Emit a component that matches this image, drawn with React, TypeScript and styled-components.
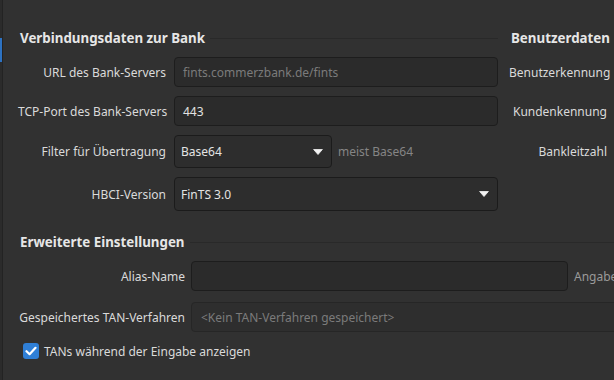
import React from 'react';
import styled, { createGlobalStyle } from 'styled-components';

const GlobalStyle = createGlobalStyle`
  html, body {
    margin: 0;
    padding: 0;
    background: #313131;
  }
  body {
    font-family: 'Noto Sans', 'DejaVu Sans', sans-serif;
  }
`;

const Window = styled.div`
  display: flex;
  width: 614px;
  height: 380px;
  overflow: hidden;
  background: #313131;
  color: #dcdcdc;
  font-size: 12px;
`;

const Edge = styled.div`
  flex: none;
  width: 2px;
  padding-top: 38px;
  background: #2b2b2b;
  border-right: 1px solid #232323;
`;

const EdgeMarker = styled.div`
  height: 24px;
  background: #2d72c2;
`;

const Content = styled.div`
  flex: 1;
  min-width: 0;
  display: flex;
  flex-direction: column;
  padding: 28px 0 0 15px;
`;

const TopRow = styled.div`
  display: flex;
  gap: 11px;
`;

const Group = styled.div<{ $width?: number }>`
  flex: none;
  width: ${(p) => (p.$width ? `${p.$width}px` : 'auto')};
  display: flex;
  flex-direction: column;
`;

const Header = styled.div<{ $top?: number }>`
  display: flex;
  align-items: center;
  gap: 5px;
  height: 20px;
  padding-left: 2px;
  margin-top: ${(p) => p.$top ?? 0}px;
  margin-bottom: 9px;
`;

const HeaderTitle = styled.span`
  font-size: 13.33px;
  font-weight: 700;
  color: #e6e6e6;
  white-space: nowrap;
`;

const HeaderLine = styled.div`
  flex: 1;
  height: 1px;
  background: #292929;
`;

const Form = styled.div<{ $cols: string; $rows: string; $rowGap: number; $colGap: number }>`
  display: grid;
  grid-template-columns: ${(p) => p.$cols};
  grid-template-rows: ${(p) => p.$rows};
  row-gap: ${(p) => p.$rowGap}px;
  column-gap: ${(p) => p.$colGap}px;
  align-items: center;
`;

const Label = styled.label`
  text-align: right;
  white-space: nowrap;
  color: #dadada;
`;

const Field = styled.div<{ $muted?: boolean }>`
  box-sizing: border-box;
  height: 30px;
  display: flex;
  align-items: center;
  padding: 0 8px;
  border: 1px solid #1d1d1d;
  border-radius: 4px;
  background: #2b2b2b;
  color: ${(p) => (p.$muted ? '#7b7b7b' : '#e2e2e2')};
  white-space: nowrap;
  overflow: hidden;
`;

const FlatField = styled(Field)`
  grid-column: 2 / -1;
  width: 460px;
  background: #2e2e2e;
  border-color: #262626;
  padding-left: 9px;
`;

const ComboCell = styled.div`
  display: flex;
  align-items: center;
  gap: 6px;
  height: 100%;
`;

const Combo = styled.div<{ $width?: number }>`
  box-sizing: border-box;
  width: ${(p) => (p.$width ? `${p.$width}px` : '100%')};
  height: 100%;
  display: flex;
  align-items: center;
  justify-content: space-between;
  padding: 0 8px 0 6px;
  border: 1px solid #1b1b1b;
  border-radius: 4px;
  background: #2d2d2d;
  color: #e4e4e4;
`;

const Hint = styled.span`
  color: #858585;
  white-space: nowrap;
`;

const SideHint = styled(Hint)`
  color: #9a9a9a;
`;

const CheckRow = styled.label`
  display: flex;
  align-items: center;
  gap: 5px;
  margin-top: 11px;
  padding-left: 5px;
  height: 16px;
  color: #dadada;
`;

const CheckBox = styled.span`
  width: 16px;
  height: 16px;
  border-radius: 3px;
  background: #2f7fd6;
  display: flex;
  align-items: center;
  justify-content: center;
`;

const Arrow = () => (
  <svg width="10" height="6" viewBox="0 0 10 6">
    <path d="M0.6 0.5 H9.4 L5 5.5 Z" fill="#f2f2f2" stroke="#f2f2f2" strokeWidth="0.8" strokeLinejoin="round" />
  </svg>
);

const Check = () => (
  <svg width="12" height="10" viewBox="0 0 12 10">
    <path d="M1.5 5.2 L4.6 8.2 L10.5 1.8" fill="none" stroke="#ffffff" strokeWidth="2.2" strokeLinecap="round" strokeLinejoin="round" />
  </svg>
);

const App = () => (
  <>
    <GlobalStyle />
    <Window>
      <Edge>
        <EdgeMarker />
      </Edge>
      <Content>
        <TopRow>
          <Group $width={480}>
            <Header>
              <HeaderTitle>Verbindungsdaten zur Bank</HeaderTitle>
              <HeaderLine />
            </Header>
            <Form $cols="148px 1fr" $rows="30px 30px 33px 34px" $rowGap={9} $colGap={8}>
              <Label>URL des Bank-Servers</Label>
              <Field $muted>fints.commerzbank.de/fints</Field>
              <Label>TCP-Port des Bank-Servers</Label>
              <Field>443</Field>
              <Label>Filter für Übertragung</Label>
              <ComboCell>
                <Combo $width={158}>
                  <span>Base64</span>
                  <Arrow />
                </Combo>
                <Hint>meist Base64</Hint>
              </ComboCell>
              <Label>HBCI-Version</Label>
              <ComboCell>
                <Combo>
                  <span>FinTS 3.0</span>
                  <Arrow />
                </Combo>
              </ComboCell>
            </Form>
          </Group>
          <Group>
            <Header>
              <HeaderTitle>Benutzerdaten</HeaderTitle>
            </Header>
            <Form $cols="98px 200px" $rows="30px 30px 33px" $rowGap={9} $colGap={8}>
              <Label>Benutzerkennung</Label>
              <Field />
              <Label>Kundenkennung</Label>
              <Field />
              <Label>Bankleitzahl</Label>
              <Field />
            </Form>
          </Group>
        </TopRow>
        <Header $top={21}>
          <HeaderTitle>Erweiterte Einstellungen</HeaderTitle>
          <HeaderLine />
        </Header>
        <Form $cols="167px 377px auto" $rows="30px 30px" $rowGap={11} $colGap={6}>
          <Label>Alias-Name</Label>
          <Field />
          <SideHint>Angabe optional</SideHint>
          <Label>Gespeichertes TAN-Verfahren</Label>
          <FlatField $muted>&lt;Kein TAN-Verfahren gespeichert&gt;</FlatField>
        </Form>
        <CheckRow>
          <CheckBox>
            <Check />
          </CheckBox>
          TANs während der Eingabe anzeigen
        </CheckRow>
      </Content>
    </Window>
  </>
);

export default App;
